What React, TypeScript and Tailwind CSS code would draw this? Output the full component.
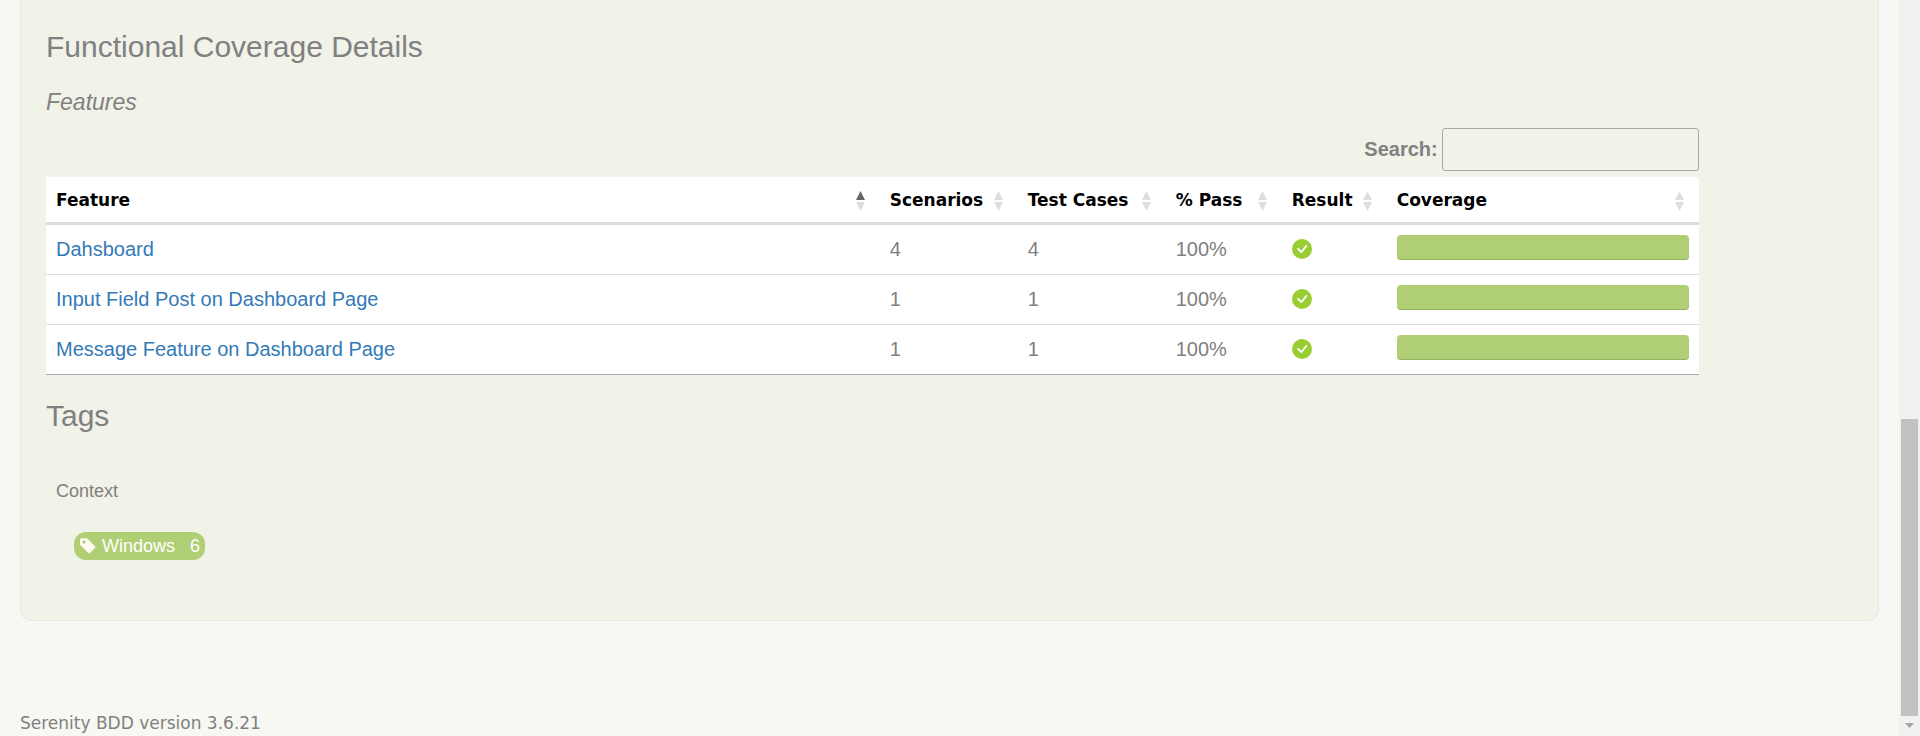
import React from "react";
import { BsCheckCircleFill, BsTagFill } from "react-icons/bs";

type Feature = { name: string; scenarios: number; testCases: number; pass: number };

const features: Feature[] = [
  { name: "Dahsboard", scenarios: 4, testCases: 4, pass: 100 },
  { name: "Input Field Post on Dashboard Page", scenarios: 1, testCases: 1, pass: 100 },
  { name: "Message Feature on Dashboard Page", scenarios: 1, testCases: 1, pass: 100 },
];

const columns = [
  { label: "Feature", width: "" },
  { label: "Scenarios", width: "w-[138px]" },
  { label: "Test Cases", width: "w-[148px]" },
  { label: "% Pass", width: "w-[116px]" },
  { label: "Result", width: "w-[105px]" },
  { label: "Coverage", width: "w-[312px]" },
];

const cell = "border-b border-[#ddd] px-[10px] pt-0 pb-[2px] group-last:border-[#aaa]";

function SortIcon({ ascending }: { ascending: boolean }) {
  return (
    <svg width="9" height="20" viewBox="0 0 9 20" aria-hidden="true" className="mt-[2px] shrink-0">
      <path d="M4.5 0 9 9H0z" fill={ascending ? "#666" : "#ddd"} />
      <path d="M4.5 20 9 11H0z" fill="#ddd" />
    </svg>
  );
}

function CoverageTable() {
  return (
    <table className="w-full table-fixed border-separate border-spacing-0 bg-white text-left text-xl leading-7">
      <thead>
        <tr className="h-12">
          {columns.map((column, index) => (
            <th key={column.label} className={`border-b-3 border-[#ddd] p-0 font-bold ${column.width}`}>
              <button
                type="button"
                className="flex w-full items-center justify-between pr-[15px] pl-[10px] text-left font-['DejaVu_Sans',sans-serif] text-[17px] leading-6 font-bold whitespace-nowrap text-black"
              >
                {column.label}
                <SortIcon ascending={index === 0} />
              </button>
            </th>
          ))}
        </tr>
      </thead>
      <tbody>
        {features.map((feature) => (
          <tr key={feature.name} className="group h-[50px]">
            <td className={cell}>
              <a href="#feature" className="text-[#337ab7]">
                {feature.name}
              </a>
            </td>
            <td className={cell}>{feature.scenarios}</td>
            <td className={cell}>{feature.testCases}</td>
            <td className={cell}>{feature.pass}%</td>
            <td className={cell}>
              <BsCheckCircleFill size={20} className="text-[#9acd32]" aria-label="Passed" />
            </td>
            <td className={cell}>
              <div
                className="mb-[2px] h-[25px] rounded bg-[#b0cf74] shadow-[inset_0_-1px_0_rgba(0,0,0,0.15)]"
                style={{ width: `${feature.pass}%` }}
              />
            </td>
          </tr>
        ))}
      </tbody>
    </table>
  );
}

export default function App() {
  return (
    <div className="flex min-h-screen bg-[#f7f8f3] font-['Liberation_Sans',sans-serif] text-[#808080]">
      <main className="min-w-0 flex-1 px-5">
        <section className="rounded-b-xl border border-t-0 border-[#e6e7e2] bg-[#f1f2e8] pb-[60px]">
          <div className="ml-[25px] w-[89%]">
            <h2 className="pt-[29px] text-[30px] leading-9">Functional Coverage Details</h2>
            <h3 className="mt-[23px] text-[23px] leading-7 italic">Features</h3>
            <div className="mt-3 mb-[6px] flex items-center justify-end gap-1">
              <label htmlFor="search" className="pb-[2px] text-xl leading-7 font-bold">
                Search:
              </label>
              <input
                id="search"
                type="search"
                className="h-[43px] w-[257px] rounded-[3px] border border-[#aaa] bg-transparent px-1 outline-none"
              />
            </div>
            <CoverageTable />
            <h2 className="mt-[23px] text-[30px] leading-9">Tags</h2>
            <div className="mt-[45px] pl-[10px]">
              <h4 className="text-lg leading-6">Context</h4>
              <a
                href="#windows"
                className="mt-[29px] ml-[18px] flex h-7 w-fit items-center rounded-xl bg-[#b0cf74] px-[5px] text-lg leading-7 text-white"
              >
                <BsTagFill size={18} className="mr-[5px] text-[#fffaf0]" />
                Windows
                <span className="ml-[15px]">6</span>
              </a>
            </div>
          </div>
        </section>
        <footer className="mt-[90px] font-['DejaVu_Sans',sans-serif] text-[17px] leading-6">
          Serenity BDD version 3.6.21
        </footer>
      </main>
      <div className="sticky top-0 flex h-screen w-[21px] flex-col bg-[#f1f1f1] px-[2px]" aria-hidden="true">
        <div className="flex-[419]" />
        <div className="flex-[297] bg-[#c1c1c1]" />
        <div className="flex h-5 items-start justify-center pt-[7px]">
          <svg width="9" height="5" viewBox="0 0 9 5">
            <path d="M0 0h9L4.500 5z" fill="#a3a3a3" />
          </svg>
        </div>
      </div>
    </div>
  );
}
